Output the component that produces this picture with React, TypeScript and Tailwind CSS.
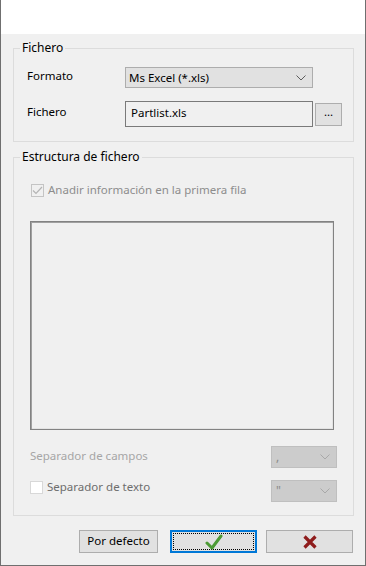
const font = { fontFamily: '"Noto Sans", "Open Sans", sans-serif' };

function Chevron({ light }: { light?: boolean }) {
    return (
        <svg width="10" height="6" viewBox="0 0 10 6" className="shrink-0">
            <path d="M0.5 0.5 L5 5 L9.5 0.5" fill="none" stroke={light ? '#a8a8a8' : '#5c5c5c'} strokeWidth="1" />
        </svg>
    );
}

function SmallSelect({ value }: { value: string }) {
    return (
        <div className="w-[66px] h-[22px] bg-[#cccccc] border border-[#bfbfbf] flex items-center justify-between pl-[4px] pr-[6px] text-[12px] text-[#8a8a8a]">
            <span className="leading-none">{value}</span>
            <Chevron light />
        </div>
    );
}

export default function App() {
    return (
        <div style={font} className="w-[366px] h-[566px] flex flex-col border-x border-b border-[#6f6f6f] text-[11.5px] text-black bg-white">
            {/* title strip */}
            <div className="h-[34px] bg-white shrink-0" />

            <div className="flex-1 bg-[#f0f0f0] pl-[12px] pr-[11px] pt-[6px] flex flex-col">
                {/* Fichero */}
                <fieldset className="border border-[#dcdcdc]">
                    <legend className="px-[2px] ml-[6px] leading-[16px] text-[12px]">Fichero</legend>
                    <div className="pl-[13px] pr-[11px] pb-[14px]">
                        <div className="flex items-center mt-[11px] h-[21px]">
                            <span className="w-[98px] -mt-[4px]">Formato</span>
                            <div className="w-[188px] h-[21px] bg-[#e1e1e1] border border-[#adadad] flex items-center justify-between pl-[3px] pr-[6px]">
                                <span>Ms Excel (*.xls)</span>
                                <Chevron />
                            </div>
                        </div>
                        <div className="flex items-center mt-[13px]">
                            <span className="w-[98px] -mt-[4px]">Fichero</span>
                            <div className="w-[188px] h-[26px] bg-[#f0f0f0] border border-[#7a7a7a] flex items-start pl-[5px] pt-[2px]">
                                Partlist.xls
                            </div>
                            <button className="ml-[2px] w-[27px] h-[23px] bg-[#e1e1e1] border border-[#adadad] flex items-center justify-center leading-none pb-[4px]">
                                ...
                            </button>
                        </div>
                    </div>
                </fieldset>

                {/* Estructura de fichero */}
                <fieldset className="mt-[7px] border border-[#dcdcdc]">
                    <legend className="px-[2px] ml-[6px] leading-[16px] text-[12px]">Estructura de fichero</legend>
                    <div className="pl-[17px] pr-[16px] pb-[13px]">
                        <div className="flex items-center mt-[18px] gap-[4px] text-[#8d8d8d]">
                            <span className="w-[13px] h-[13px] border border-[#c4c4c4] bg-[#f0f0f0] flex items-center justify-center">
                                <svg width="11" height="9" viewBox="0 0 11 9">
                                    <path d="M1 4.5 L4 7.5 L10 1" fill="none" stroke="#b4b4b4" strokeWidth="1.2" />
                                </svg>
                            </span>
                            <span className="-mt-[2px]">Anadir información en la primera fila</span>
                        </div>

                        <div className="mt-[23px] -ml-[1px] w-[304px] h-[209px] bg-[#f0f0f0] border border-[#828282] shadow-[inset_1px_1px_0_#a0a0a0,inset_-1px_-1px_0_#e3e3e3]" />

                        <div className="flex items-center justify-between mt-[16px] -ml-[1px]">
                            <span className="text-[#a6a6a6] -mt-[3px]">Separador de campos</span>
                            <SmallSelect value="," />
                        </div>
                        <div className="flex items-center justify-between mt-[12px] -ml-[1px]">
                            <div className="flex items-center gap-[4px] -mt-[8px]">
                                <span className="w-[13px] h-[13px] bg-white border border-[#d8d8d8]" />
                                <span className="text-[#6d6d6d] -mt-[2px]">Separador de texto</span>
                            </div>
                            <SmallSelect value={'"'} />
                        </div>
                    </div>
                </fieldset>

                {/* buttons */}
                <div className="flex justify-end items-center mt-[14px] mr-[1px]">
                    <button className="w-[79px] h-[23px] bg-[#e1e1e1] border border-[#adadad] leading-none pb-[2px]">
                        Por defecto
                    </button>
                    <button className="ml-[12px] w-[87px] h-[23px] bg-[#e1e1e1] border-2 border-[#0078d7] p-[1px] flex">
                        <span className="flex-1 border border-dotted border-black flex items-center justify-center">
                            <svg width="18" height="16" viewBox="0 0 18 16">
                                <path d="M2 9 L7 14 L16 2" fill="none" stroke="#4c9a35" strokeWidth="3" strokeLinecap="round" strokeLinejoin="round" />
                            </svg>
                        </span>
                    </button>
                    <button className="ml-[9px] w-[87px] h-[23px] bg-[#e1e1e1] border border-[#adadad] flex items-center justify-center">
                        <svg width="16" height="16" viewBox="0 0 16 16">
                            <path d="M2.5 2.5 L13.5 13.5 M13.5 2.5 L2.5 13.5" stroke="#8f1d1d" strokeWidth="3.2" strokeLinecap="butt" />
                        </svg>
                    </button>
                </div>
            </div>
        </div>
    );
}
